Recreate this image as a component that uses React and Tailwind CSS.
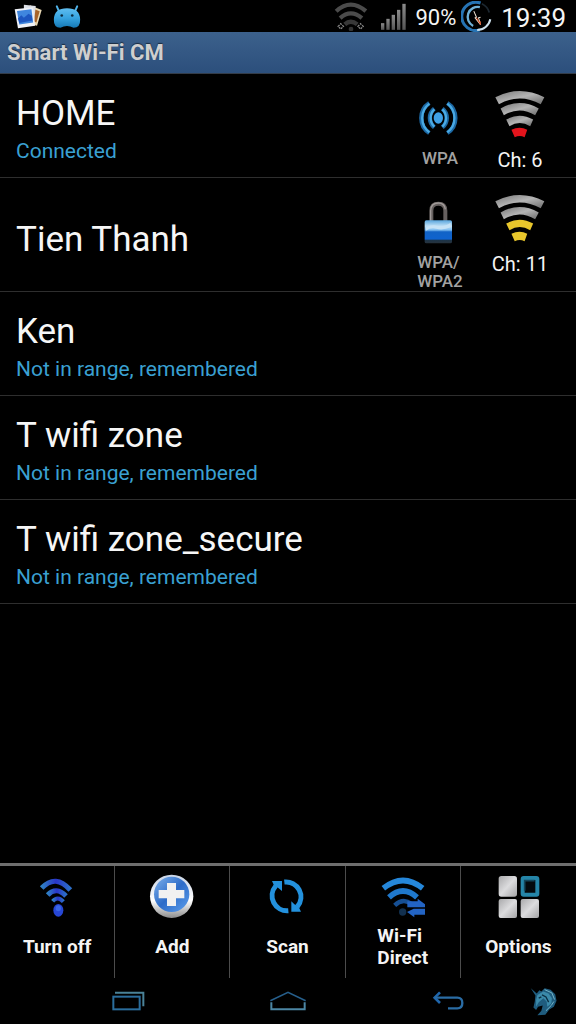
const NETWORKS = [
  { name: "HOME", status: "Connected", security: ["WPA"], icon: "broadcast", channel: 6, level: 1 },
  { name: "Tien Thanh", security: ["WPA/", "WPA2"], icon: "lock", channel: 11, level: 2 },
  { name: "Ken", status: "Not in range, remembered" },
  { name: "T wifi zone", status: "Not in range, remembered" },
  { name: "T wifi zone_secure", status: "Not in range, remembered" },
];

const LEVEL_COLORS = { 1: "#e3141c", 2: "#e8c62c" };

// top to bottom, widest band first
const SIGNAL_BANDS = [
  "M1 21 Q75 -17 150 21 L139 42 Q75 7 12 42 Z",
  "M17 55 Q75 22 133 55 L122 76 Q75 46 27 76 Z",
  "M34 89 Q75 65 116 89 L107 109 Q75 90 44 109 Z",
  "M50 120 Q75 108 98 120 L90 143 Q75 135 60 143 Z",
];

function SignalIcon({ level }) {
  return (
    <svg viewBox="0 0 152 144" className="w-[50px] h-12" aria-hidden="true">
      <defs>
        <linearGradient id="steel" x1="0" y1="0" x2="1" y2="1">
          <stop offset="0" stopColor="#777" />
          <stop offset="0.5" stopColor="#b4b4b4" />
          <stop offset="1" stopColor="#6c6c6c" />
        </linearGradient>
      </defs>
      {SIGNAL_BANDS.map((d, i) => (
        <path key={d} d={d} fill={i >= 4 - level ? LEVEL_COLORS[level] : "url(#steel)"} />
      ))}
    </svg>
  );
}

function BroadcastIcon() {
  return (
    <svg viewBox="0 0 144 144" className="w-12 h-12" fill="none" aria-hidden="true">
      <g stroke="#1c68a4" strokeWidth="13">
        <path d="M40 27 A54 54 0 0 0 40 117" />
        <path d="M55 44 A36 36 0 0 0 55 100" />
        <path d="M94 27 A54 54 0 0 1 94 117" />
        <path d="M79 44 A36 36 0 0 1 79 100" />
      </g>
      <g stroke="#4aa9e2" strokeWidth="7">
        <path d="M40 29 A54 54 0 0 0 40 115" />
        <path d="M55 46 A36 36 0 0 0 55 98" />
        <path d="M94 29 A54 54 0 0 1 94 115" />
        <path d="M79 46 A36 36 0 0 1 79 98" />
      </g>
      <ellipse cx="67" cy="72" rx="14" ry="17" fill="#3fa0e6" />
    </svg>
  );
}

function LockIcon() {
  return (
    <svg viewBox="0 0 144 144" className="w-12 h-12" fill="none" aria-hidden="true">
      <defs>
        <linearGradient id="lockBody" x1="0" y1="0" x2="0" y2="1">
          <stop offset="0" stopColor="#5aa6de" />
          <stop offset="0.25" stopColor="#bfe0f6" />
          <stop offset="0.42" stopColor="#7fbdf0" />
          <stop offset="0.5" stopColor="#1263c6" />
          <stop offset="0.82" stopColor="#0f63cf" />
          <stop offset="0.86" stopColor="#1c3448" />
          <stop offset="1" stopColor="#27323c" />
        </linearGradient>
      </defs>
      <path d="M46 72 V38 Q46 17 67 17 Q88 17 88 38 V72" stroke="#66605f" strokeWidth="12" />
      <path d="M44 70 V38 Q45 15 67 15 Q86 15 88 34" stroke="#a09a98" strokeWidth="4" />
      <rect x="26" y="67" width="82" height="69" rx="5" fill="url(#lockBody)" />
      <path d="M30 88 Q48 78 66 84 Q88 86 104 74 V88 Q80 98 60 92 Q44 88 30 98 Z" fill="#c6e2f6" />
    </svg>
  );
}

function TurnOffIcon() {
  return (
    <svg viewBox="0 0 144 144" className="w-12 h-12" fill="none" aria-hidden="true">
      <defs>
        <linearGradient id="indigo" x1="0" y1="0" x2="1" y2="0">
          <stop offset="0" stopColor="#2f80c4" />
          <stop offset="0.5" stopColor="#2a36c8" />
          <stop offset="1" stopColor="#2c6fc8" />
        </linearGradient>
      </defs>
      <g stroke="url(#indigo)" strokeWidth="15">
        <path d="M26 48 Q68 4 112 54" />
        <path d="M44 69 Q70 42 99 72" />
        <path d="M59 88 Q74 70 91 89" strokeWidth="12" />
      </g>
      <ellipse cx="76" cy="115" rx="15" ry="19" fill="#2747d6" />
      <ellipse cx="76" cy="109" rx="8" ry="9" fill="#3a66e6" />
    </svg>
  );
}

function AddIcon() {
  return (
    <svg viewBox="0 0 144 144" className="w-12 h-12" aria-hidden="true">
      <defs>
        <linearGradient id="addRing" x1="0" y1="0" x2="0" y2="1">
          <stop offset="0" stopColor="#c9d4e6" />
          <stop offset="0.6" stopColor="#ffffff" />
          <stop offset="1" stopColor="#8c8c8c" />
        </linearGradient>
        <linearGradient id="addFace" x1="0" y1="0" x2="1" y2="1">
          <stop offset="0" stopColor="#7fb2ec" />
          <stop offset="0.5" stopColor="#2e6cc8" />
          <stop offset="1" stopColor="#5ea0ee" />
        </linearGradient>
      </defs>
      <circle cx="71" cy="73" r="65" fill="url(#addRing)" />
      <circle cx="71" cy="67" r="53" fill="url(#addFace)" />
      <path d="M57 33 H84 V54 H109 V79 H84 V102 H57 V79 H32 V54 H57 Z" fill="#f1f1f1" />
    </svg>
  );
}

function ScanIcon() {
  return (
    <svg viewBox="0 0 144 144" className="w-12 h-12" aria-hidden="true">
      <g fill="none" stroke="#2391dd" strokeWidth="15">
        <path d="M76 116 A45 45 0 0 1 38 42" />
        <path d="M64 30 A45 45 0 0 1 103 104" />
      </g>
      <path d="M27 27 H57 V57 L46 48 L34 42 Z" fill="#2391dd" />
      <path d="M114 119 H85 V88 L94 97 L106 103 Z" fill="#2391dd" />
    </svg>
  );
}

function DirectIcon() {
  return (
    <svg viewBox="0 0 144 144" className="w-12 h-12" aria-hidden="true">
      <g fill="none" strokeWidth="17">
        <path d="M13 49 Q72 2 131 49" stroke="#2587da" />
        <path d="M30 76 Q72 38 114 76" stroke="#1f78cc" />
        <path d="M47 100 Q72 76 98 96" stroke="#164f94" strokeWidth="13" />
      </g>
      <circle cx="71" cy="120" r="11" fill="#12304f" />
      <path d="M85 88 H116 V80 L138 97 V106 H85 Z" fill="#2364c4" />
      <path d="M138 110 H104 L84 120 L106 136 V128 H138 Z" fill="#2364c4" />
    </svg>
  );
}

function OptionsIcon() {
  return (
    <svg viewBox="0 0 144 144" className="w-12 h-12" aria-hidden="true">
      <defs>
        <linearGradient id="tile" x1="0" y1="0" x2="1" y2="1">
          <stop offset="0" stopColor="#a9a9ab" />
          <stop offset="0.5" stopColor="#dcdcde" />
          <stop offset="1" stopColor="#a4a4a6" />
        </linearGradient>
      </defs>
      <rect x="14" y="12" width="55" height="62" rx="8" fill="url(#tile)" />
      <rect x="14" y="81" width="55" height="57" rx="6" fill="url(#tile)" />
      <rect x="80" y="81" width="55" height="57" rx="6" fill="url(#tile)" />
      <rect x="86" y="18" width="44" height="50" rx="3" fill="#04090c" stroke="#2585a8" strokeWidth="12" />
      <path d="M92 56 V26 H122" fill="none" stroke="#14465a" strokeWidth="5" />
    </svg>
  );
}

const ACTIONS = [
  { lines: ["Turn off"], Icon: TurnOffIcon },
  { lines: ["Add"], Icon: AddIcon },
  { lines: ["Scan"], Icon: ScanIcon },
  { lines: ["Wi-Fi", "Direct"], Icon: DirectIcon },
  { lines: ["Options"], Icon: OptionsIcon },
];

function StatusBar() {
  return (
    <div className="flex items-center h-8 pl-[14px] pr-[10px] text-[#f4f4f4]">
      <svg viewBox="0 0 88 76" className="w-[29px] h-[25px]" aria-hidden="true">
        <path d="M48 4 L84 18 L70 66 L44 60 Z" fill="#e9d9b4" />
        <path d="M56 14 L78 22 L68 56 L54 50 Z" fill="#a8642a" />
        <path d="M30 2 L66 6 L60 64 L30 60 Z" fill="#dcdfe6" />
        <path d="M2 16 L58 10 L64 66 L12 74 Z" fill="#eef1f8" />
        <path d="M9 21 L53 16 L58 56 L16 62 Z" fill="#3f86de" />
        <path d="M12 44 L22 34 L30 42 L44 30 L54 36 L56 50 L16 58 Z" fill="#1d56c0" />
      </svg>
      <svg viewBox="0 0 84 70" className="ml-[10px] w-7 h-[23px]" aria-hidden="true">
        <defs>
          <linearGradient id="droid" x1="0" y1="0" x2="0" y2="1">
            <stop offset="0" stopColor="#5fbdf0" />
            <stop offset="0.5" stopColor="#36a3e0" />
            <stop offset="1" stopColor="#1678b4" />
          </linearGradient>
        </defs>
        <path d="M11 4 L17 18 M73 4 L67 18" stroke="#4fb2e8" strokeWidth="6" strokeLinecap="round" />
        <path d="M2 44 Q3 10 42 10 Q81 10 82 44 Q83 69 62 69 Q52 64 42 64 Q32 64 22 69 Q1 69 2 44 Z" fill="url(#droid)" />
        <circle cx="26" cy="32" r="4" fill="#0b2c42" />
        <circle cx="58" cy="32" r="4" fill="#0b2c42" />
      </svg>

      <div className="flex items-center ml-auto">
        <svg viewBox="0 0 102 88" className="w-[34px] h-[29px]" fill="none" aria-hidden="true">
          <g stroke="#4b4b4b" strokeWidth="13">
            <path d="M6 28 Q50 -12 96 28" />
            <path d="M18 49 Q50 20 84 49" />
            <path d="M32 68 Q50 52 70 68" stroke="#383838" />
          </g>
          <circle cx="51" cy="82" r="7" fill="#333" />
          <path d="M12 74 L20 66 L28 74 L20 82 Z M72 74 L80 66 L88 74 L80 82 Z" stroke="#8a8a8a" strokeWidth="4" strokeDasharray="6 3" />
        </svg>
        <svg viewBox="0 0 75 80" className="ml-[13px] w-[25px] h-[27px]" aria-hidden="true">
          <defs>
            <linearGradient id="cell" x1="0" y1="0" x2="0" y2="1">
              <stop offset="0" stopColor="#8b8b8b" />
              <stop offset="1" stopColor="#555" />
            </linearGradient>
          </defs>
          {[60, 47, 35, 20, 2].map((y, i) => (
            <rect key={y} x={i * 16} y={y} width="10" height={80 - y} fill="url(#cell)" />
          ))}
        </svg>
        <span className="ml-[9px] pt-[3px] text-[22px] leading-8">90%</span>
        <svg viewBox="0 0 92 92" className="ml-[5px] w-[31px] h-[31px]" fill="none" aria-hidden="true">
          <path d="M58 6 A42 42 0 1 0 56 86" stroke="#2673b4" strokeWidth="9" />
          <path d="M48 86 A40 40 0 0 0 87 54" stroke="#cfe2ee" strokeWidth="6" />
          <path d="M56 18 A30 30 0 0 0 36 74" stroke="#6fb0d8" strokeWidth="7" />
          <path d="M62 8 A42 42 0 0 1 84 34" stroke="#1c2730" strokeWidth="5" />
          <path d="M38 30 L46 48 L42 50 L58 70 L52 50 L58 48" stroke="#f6e7d8" strokeWidth="3" />
          <path d="M46 50 L58 70 L57 60" stroke="#d9572c" strokeWidth="3" />
        </svg>
        <time className="ml-[9px] pt-[3px] text-[26px] leading-8">19:39</time>
      </div>
    </div>
  );
}

function NetworkRow({ network }) {
  return (
    <li className="flex min-h-[104px] border-b border-[#2e2e2e]">
      <div className="flex flex-1 flex-col justify-center gap-[2px] pl-4 pt-[10px]">
        <h2 className="text-[35px] leading-[42px] text-[#f6f6f6]">{network.name}</h2>
        {network.status && <p className="pb-1 text-[21px] leading-7 text-[#3aa0d2]">{network.status}</p>}
      </div>
      {network.security && (
        <div className="flex flex-col items-center w-[80px] pt-5">
          {network.icon === "lock" ? <LockIcon /> : <BroadcastIcon />}
          <div className="mt-[7px] text-[17px] leading-[19px] font-medium text-[#a2a2a2]">
            {network.security.map((line) => (
              <div key={line}>{line}</div>
            ))}
          </div>
        </div>
      )}
      {network.channel && (
        <div className="flex flex-col items-center w-[80px] mr-4 pt-4">
          <SignalIcon level={network.level} />
          <span className="mt-[10px] text-[20px] leading-6 text-[#f4f4f4]">Ch: {network.channel}</span>
        </div>
      )}
    </li>
  );
}

function NavBar() {
  return (
    <nav className="flex h-[46px]">
      <div className="flex flex-1 justify-between pl-16">
        <button type="button" aria-label="Recent apps" className="flex items-center justify-center w-32">
          <svg viewBox="0 0 99 60" className="w-[33px] h-5" fill="none" aria-hidden="true">
            <rect x="4" y="17" width="79" height="38" stroke="#2a6d9c" strokeWidth="6" />
            <path d="M9 5 H94 V46" stroke="#4a8298" strokeWidth="6" />
          </svg>
        </button>
        <button type="button" aria-label="Home" className="flex items-center justify-center w-32">
          <svg viewBox="0 0 108 60" className="w-9 h-5" fill="none" aria-hidden="true">
            <path d="M1 29 L54 4 L107 29" stroke="#265f8c" strokeWidth="5" />
            <path d="M4 34 V55 H104 V34" stroke="#4c86a4" strokeWidth="6" />
          </svg>
        </button>
        <button type="button" aria-label="Back" className="flex items-center justify-center w-32">
          <svg viewBox="0 0 96 60" className="w-8 h-5" fill="none" aria-hidden="true">
            <path d="M24 4 L8 20 L24 36" stroke="#1f66ac" strokeWidth="8" />
            <path d="M8 20 H76 Q91 20 91 36 Q91 52 76 52 H48" stroke="#2a6ca4" strokeWidth="7" />
          </svg>
        </button>
      </div>
      <button type="button" aria-label="Menu" className="flex items-center justify-center w-16">
        <svg viewBox="0 0 84 88" className="w-7 h-[29px]" aria-hidden="true">
          <path d="M2 4 L20 20 L28 10 L34 14 L44 4 L62 8 L76 22 L80 42 L72 60 L58 68 L46 84 L22 86 L34 72 L38 56 L24 60 L18 70 L10 62 L14 44 L16 26 Z" fill="#1f5c7e" />
          <path d="M22 24 L40 14 L56 20 L66 34 L64 50 L52 60 L50 44 L40 34 L26 46 L18 60 L18 40 Z" fill="#3b8aaa" />
          <path d="M44 8 L66 18 L74 38 M48 72 L64 56 L72 44" fill="none" stroke="#74b4c6" strokeWidth="3" />
          <path d="M36 24 L48 30 L56 46 M26 34 L34 30" fill="none" stroke="#0b2f44" strokeWidth="4" />
        </svg>
      </button>
    </nav>
  );
}

export default function App() {
  return (
    <div className="flex flex-col min-h-screen bg-black font-[Roboto,sans-serif]">
      <StatusBar />
      <header className="h-[42px] px-[7px] bg-linear-to-b from-[#3c618c] to-[#2c4f7c] border-b border-[#333c48]">
        <h1 className="text-[22px] leading-[42px] font-bold text-[#cfcfcf] text-shadow-[0_-1px_1px_#1c2c40]">Smart Wi-Fi CM</h1>
      </header>

      <main className="flex-1">
        <ul>
          {NETWORKS.map((network) => (
            <NetworkRow key={network.name} network={network} />
          ))}
        </ul>
      </main>

      {/* Action bar */}
      <div className="grid grid-cols-5 border-t-3 border-[#6e6e6e]">
        {ACTIONS.map(({ lines, Icon }) => (
          <button
            key={lines[0]}
            type="button"
            className="flex flex-col items-center h-28 pt-[6px] border-r border-[#4c4c4c] last:border-r-0"
          >
            <Icon />
            <span className="flex flex-col justify-center h-[54px] text-left text-[19px] leading-[22px] font-bold text-[#f4f4f4]">
              {lines.map((line) => (
                <span key={line}>{line}</span>
              ))}
            </span>
          </button>
        ))}
      </div>

      <NavBar />
    </div>
  );
}
